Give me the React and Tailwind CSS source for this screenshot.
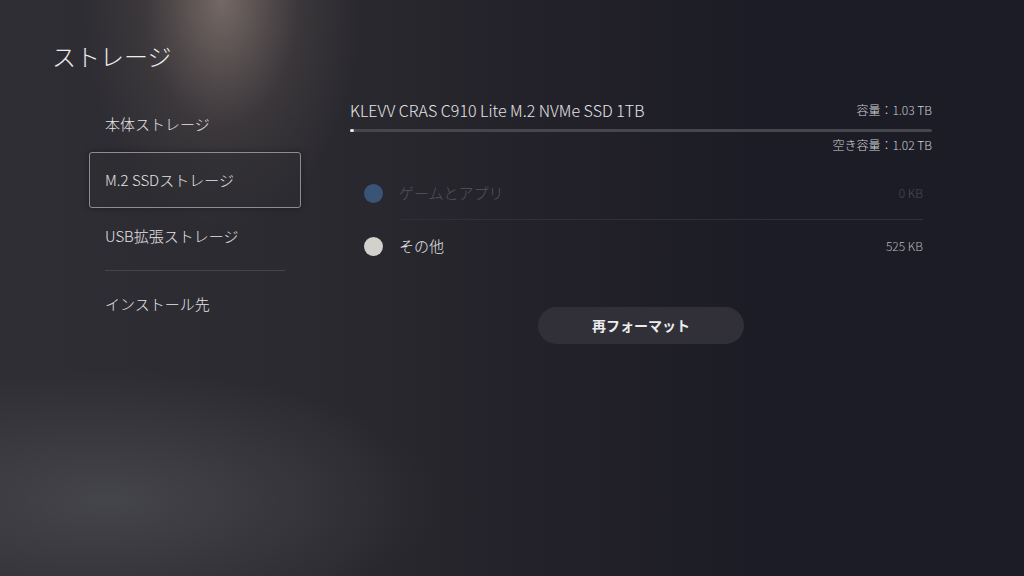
// ストレージ設定画面 — M.2 SSD の詳細表示
import React from 'react'

const FONT = "font-['Noto_Sans_CJK_JP','Noto_Sans',sans-serif] font-light"

const menu = [
  { label: '本体ストレージ' },
  { label: 'M.2 SSDストレージ', selected: true },
  { label: 'USB拡張ストレージ' },
]

function MenuItem({ label, selected }) {
  return (
    <div
      className={`h-[56px] flex items-center px-[15px] text-[15px] text-[#e4e3e6] border rounded-[3px] ${
        selected ? 'border-[#8f8b92] bg-[#2d2c31]/40 shadow-[0_0_6px_rgba(0,0,0,0.35)]' : 'border-transparent'
      }`}>
      {label}
    </div>
  )
}

function UsageRow({ label, size, dotClass, dim }) {
  return (
    <div className="h-[52px] flex items-center">
      <div className={`w-[19px] h-[19px] rounded-full ${dotClass}`} />
      <p className={`ml-[16px] flex-1 text-[15px] ${dim ? 'text-[#54545d]' : 'text-[#e6e6e8]'}`}>{label}</p>
      <p className={`text-[12px] ${dim ? 'text-[#4a4a53]' : 'text-[#b5b5ba]'}`}>{size}</p>
    </div>
  )
}

export default function App() {
  return (
    <div
      className={`${FONT} w-[1024px] h-[576px] overflow-hidden flex bg-[radial-gradient(ellipse_140px_230px_at_222px_0px,rgba(165,145,135,0.6),rgba(120,105,100,0.2)_55%,transparent),radial-gradient(ellipse_330px_130px_at_110px_500px,rgba(88,88,96,0.55),transparent),linear-gradient(90deg,#2f2e34_0%,#2b2a30_30%,#222129_55%,#1c1c26_75%,#1b1c26_100%)]`}>
      {/* 左カラム */}
      <div className="w-[350px] shrink-0 pt-[40px]">
        <h1 className="ml-[52px] text-[24px] leading-[32px] text-[#ececec]">ストレージ</h1>
        <div className="ml-[89px] w-[212px] mt-[24px]">
          {menu.map(m => <MenuItem key={m.label} {...m} />)}
          <div className="mx-[16px] mt-[6px] mb-[5px] h-px bg-[#45444b]" />
          <MenuItem label="インストール先" />
        </div>
      </div>

      {/* 右カラム */}
      <div className="w-[582px] pt-[98px]">
        <div className="flex items-center justify-between h-[24px]">
          <p className="text-[16px] text-[#e6e6e8]">KLEVV CRAS C910 Lite M.2 NVMe SSD 1TB</p>
          <p className="text-[12px] text-[#d0d0d4]">容量：1.03 TB</p>
        </div>
        <div className="mt-[7px] h-[3px] rounded-full bg-[#46464d]">
          <div className="w-[4px] h-[3px] rounded-full bg-[#e8e8e8]" />
        </div>
        <p className="mt-[5px] text-right text-[12px] leading-[16px] text-[#d0d0d4]">空き容量：1.02 TB</p>

        <div className="ml-[14px] mr-[9px] mt-[14px]">
          <UsageRow label="ゲームとアプリ" size="0 KB" dotClass="bg-[#3a5478]" dim />
          <div className="ml-[35px] h-px bg-[#30303a]" />
          <UsageRow label="その他" size="525 KB" dotClass="bg-[#d2d1cb]" />
        </div>

        <button className="mt-[35px] mx-auto flex items-center justify-center w-[206px] h-[37px] rounded-full bg-[#313038] text-[14px] font-bold text-[#ececee]">
          再フォーマット
        </button>
      </div>
    </div>
  )
}
